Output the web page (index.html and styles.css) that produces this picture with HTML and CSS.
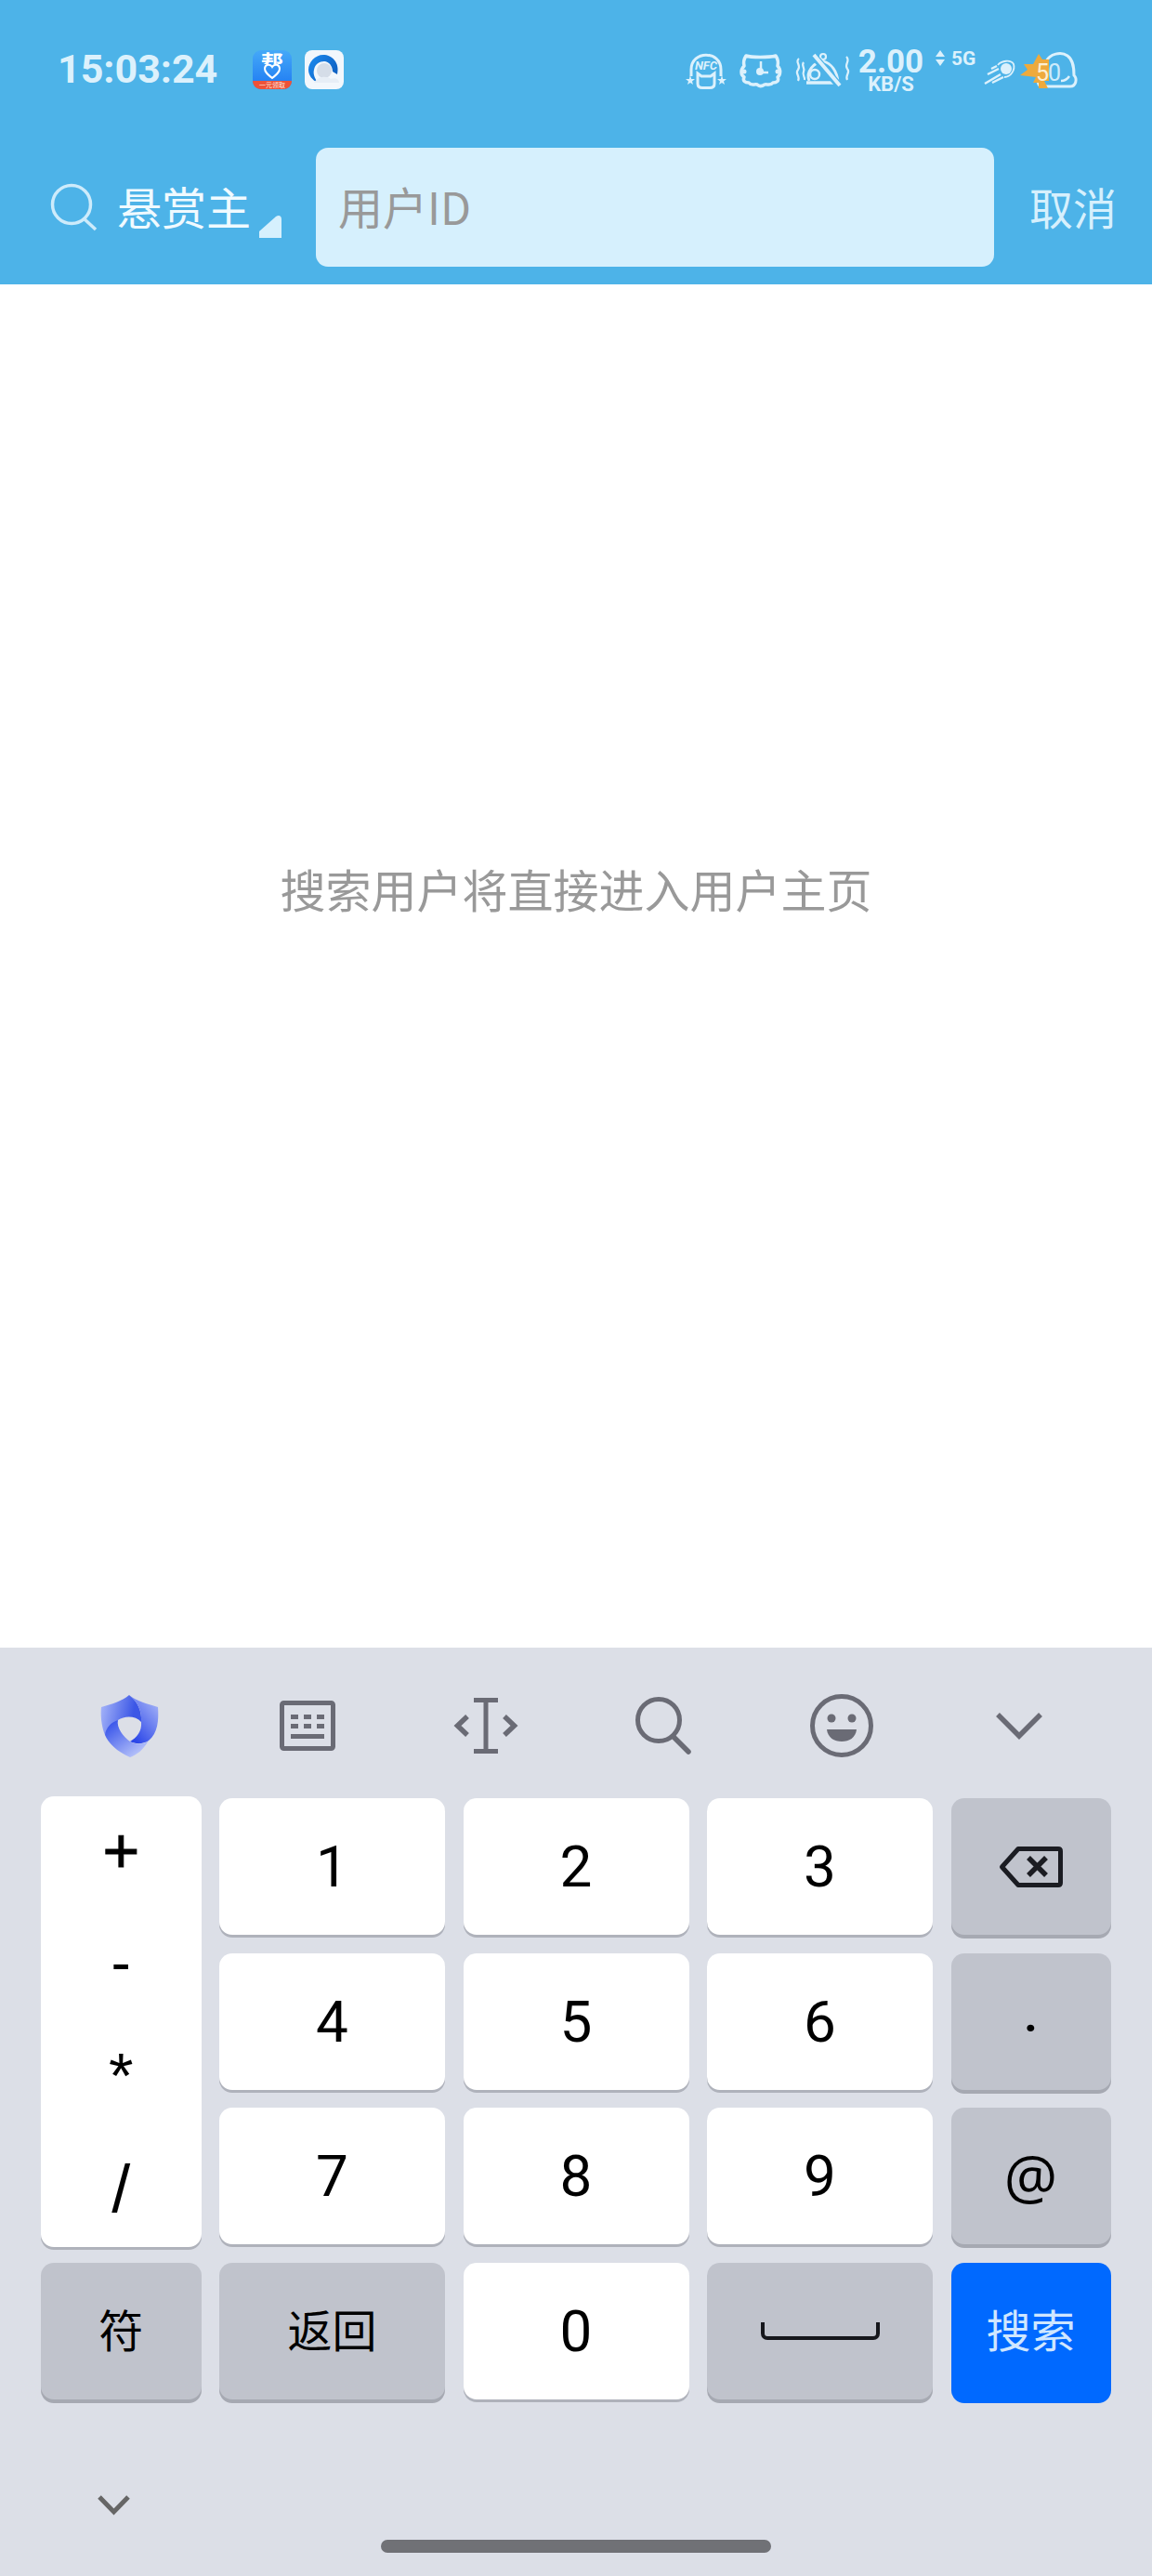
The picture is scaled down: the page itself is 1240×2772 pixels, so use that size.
FILE: index.html
```html
<!DOCTYPE html>
<html lang="zh-CN">
<head>
    <meta charset="UTF-8">
    <meta name="viewport" content="width=device-width, initial-scale=1.0">
    <title>搜索用户</title>
    <link rel="stylesheet" href="styles.css">
</head>
<body>

    <header class="topbar">
        <div class="status-bar">
            <span class="clock">15:03:24</span>

            <svg class="app-icon app-icon-first" width="42" height="42" viewBox="0 0 42 42">
                <defs>
                    <linearGradient id="bangBg" x1="0" y1="0" x2="0" y2="1">
                        <stop offset="0" stop-color="#45a9f8"/>
                        <stop offset="1" stop-color="#1d78f2"/>
                    </linearGradient>
                    <clipPath id="bangTop">
                        <rect x="0" y="0" width="42" height="15"/>
                    </clipPath>
                </defs>
                <rect width="42" height="42" rx="9" fill="url(#bangBg)"/>
                <path d="M0 33H42C42 38 38 42 33 42H9C4 42 0 38 0 33Z" fill="#ee5238"/>
                <text x="21" y="23" class="bang-char" clip-path="url(#bangTop)">帮</text>
                <path d="M21 30C16 26 13 23.500 13 20C13 15 19 14.500 21 18C23 14.500 29 15 29 20C29 23.500 26 26 21 30Z" fill="none" stroke="#fff" stroke-width="2"/>
                <text x="21" y="40" class="bang-tag">一元领取</text>
            </svg>

            <svg class="app-icon app-icon-second" width="42" height="42" viewBox="0 0 42 42">
                <defs>
                    <linearGradient id="qqArc" x1="0" y1="0" x2="1" y2="0.700">
                        <stop offset="0" stop-color="#1c8cf0"/>
                        <stop offset="1" stop-color="#0f5fc0"/>
                    </linearGradient>
                </defs>
                <rect width="42" height="42" rx="8" fill="#f2f7fc"/>
                <path d="M35 26C38 13 29 5 20 5C11 5 4 13 4 21C4 27 8 32 14 35C10 29 9 25 10 21C11 15 16 12 21 12C26 12 30 17 30 23Z" fill="url(#qqArc)"/>
                <circle cx="21" cy="22" r="8" fill="#d5dde8"/>
                <path d="M10 35C14 28 24 27 28 31C33 29 37 31 37 35Z" fill="#e7eef6"/>
            </svg>

            <div class="status-icons">
                <svg class="status-nfc" width="42" height="41" viewBox="0 0 42 41">
                    <path d="M5 27V20C5 -1 37 -1 37 20V27" fill="none" stroke="#dcf1fc" stroke-width="3"/>
                    <text x="21" y="20" class="nfc-text">NFC</text>
                    <path d="M12 24L16 27H26L30 24V35C30 38 28 39.500 25 39.500H17C14 39.500 12 38 12 35Z" fill="none" stroke="#dcf1fc" stroke-width="3"/>
                    <path d="M4 26L5.200 30H9L6 32.500L7 36L4 34L1 36L2 32.500L-1 30H2.800Z" fill="#dcf1fc"/>
                    <path d="M38 26L39.200 30H43L40 32.500L41 36L38 34L35 36L36 32.500L33 30H36.800Z" fill="#dcf1fc"/>
                </svg>

                <svg class="status-cat" width="44" height="37" viewBox="0 0 44 37">
                    <path d="M6 3C12 5 30 5 38 3C40 6 41 10 40 14C44 18 43 24 40 26C42 30 39 32 35 32C32 36 28 33 26 34C23 36 20 36 18 34C15 33 12 36 9 32C5 32 2 30 4 26C0 23 0 18 4 14C3 10 4 6 6 3Z" fill="none" stroke="#dcf1fc" stroke-width="3.500" stroke-linejoin="round"/>
                    <path d="M22 9V21H30" fill="none" stroke="#dcf1fc" stroke-width="2.500"/>
                    <circle cx="21" cy="20" r="4" fill="#dcf1fc"/>
                    <circle cx="4" cy="20" r="2.500" fill="#dcf1fc"/>
                    <circle cx="40" cy="20" r="2.500" fill="#dcf1fc"/>
                </svg>

                <svg class="status-dome" width="63" height="40" viewBox="0 0 63 40">
                    <path d="M6 8C1 12 9 15 5 20C1 24 8 27 5 32" fill="none" stroke="#dcf1fc" stroke-width="2.200"/>
                    <path d="M11 12C8 16 13 18 11 22C9 26 13 28 12 31" fill="none" stroke="#dcf1fc" stroke-width="2.200"/>
                    <path d="M57 6C62 11 54 14 58 19C62 23 55 26 58 31" fill="none" stroke="#dcf1fc" stroke-width="2.200"/>
                    <path d="M17 32C13 22 22 12 32 11C41 13 47 22 48 33" fill="none" stroke="#dcf1fc" stroke-width="2.800"/>
                    <path d="M14 34H50" stroke="#dcf1fc" stroke-width="3.500"/>
                    <circle cx="23" cy="25" r="5" fill="none" stroke="#dcf1fc" stroke-width="2.500"/>
                    <circle cx="32" cy="6" r="3" fill="none" stroke="#dcf1fc" stroke-width="2.200"/>
                    <path d="M20 3L50 38" stroke="#4db3e8" stroke-width="8"/>
                    <path d="M22 4L50 37" stroke="#dcf1fc" stroke-width="4"/>
                </svg>

                <div class="net-speed">
                    <span class="net-value">2.00</span>
                    <span class="net-unit">KB/S</span>
                </div>

                <div class="net-type">
                    <svg width="10" height="17" viewBox="0 0 10 17">
                        <path d="M5 0L10 7H0Z M5 17L0 10H10Z" fill="#dcf1fc"/>
                    </svg>
                    <span class="net-label">5G</span>
                </div>

                <svg class="status-comet" width="32" height="26" viewBox="0 0 32 26">
                    <circle cx="23" cy="9" r="6" fill="#dcf1fc"/>
                    <path d="M14 5C18 0 28 -1 31 4C33 10 28 18 21 18" fill="none" stroke="#dcf1fc" stroke-width="1.800"/>
                    <path d="M7 9L13 6M3 15L15 9M0 25L17 15M8 24L20 18" stroke="#dcf1fc" stroke-width="2.400" fill="none"/>
                </svg>

                <div class="battery">
                    <svg width="62" height="41" viewBox="0 0 62 41">
                        <path d="M28 11C32 3 44 0 51 5C58 10 58 20 58 26C62 30 60 38 54 38H24C20 38 18 34 21 30" fill="none" stroke="#dcf1fc" stroke-width="3"/>
                        <path d="M44 32C49 32 51 30 53 27" fill="none" stroke="#dcf1fc" stroke-width="2.500"/>
                        <path d="M20 3L24 9H31V32H26L30 40H20V34H14L17 28L0 26L8 20L4 14L14 14Z" fill="#eeaa3c"/>
                        <text x="24" y="32" class="battery-five">5</text>
                        <text x="37" y="32" class="battery-zero">0</text>
                    </svg>
                </div>
            </div>
        </div>

        <div class="search-row">
            <svg class="search-icon" width="51" height="50" viewBox="0 0 51 50">
                <circle cx="23" cy="22" r="20.500" fill="none" stroke="#cdebfb" stroke-width="3.500"/>
                <path d="M36 37L49 49" fill="none" stroke="#cdebfb" stroke-width="3.500"/>
            </svg>
            <span class="search-type">悬赏主</span>
            <svg class="search-type-arrow" width="24" height="24" viewBox="0 0 24 24">
                <path d="M0 24V17L18 1C21 -1 24 0 24 4V24Z" fill="#d6f0fd"/>
            </svg>
            <div class="search-input">用户ID</div>
            <span class="search-cancel">取消</span>
        </div>
    </header>

    <main class="search-tip">
        <p>搜索用户将直接进入用户主页</p>
    </main>

    <section class="keyboard">
        <div class="kb-tools">
            <div class="kb-tool">
                <svg width="63" height="68" viewBox="0 0 63 68">
                    <defs>
                        <linearGradient id="shieldA" x1="0" y1="0.300" x2="1" y2="0.500">
                            <stop offset="0" stop-color="#a3b2f8"/>
                            <stop offset="0.800" stop-color="#3c57e6"/>
                        </linearGradient>
                        <linearGradient id="shieldB" x1="1" y1="0" x2="0.300" y2="1">
                            <stop offset="0" stop-color="#b2bff9"/>
                            <stop offset="1" stop-color="#2c47e8"/>
                        </linearGradient>
                        <linearGradient id="shieldC" x1="0" y1="0.200" x2="0.700" y2="1">
                            <stop offset="0" stop-color="#3a56ea"/>
                            <stop offset="1" stop-color="#b8c4fa"/>
                        </linearGradient>
                    </defs>
                    <path d="M31 1C40 8 45 18 44 30C38 23 26 23 19 28L5 44C1 34 0 22 1 14C12 11 24 7 31 1Z" fill="url(#shieldA)"/>
                    <path d="M31 1C38 7 52 11 62 14C63 28 62 42 52 50C46 54 38 54 32 51C39 47 45 40 44 30C45 18 40 8 31 1Z" fill="url(#shieldB)"/>
                    <path d="M19 28C17 36 25 46 32 51C40 55 48 54 52 50C46 60 40 65 32 68C18 62 8 52 5 44C6 36 12 30 19 28Z" fill="url(#shieldC)"/>
                </svg>
            </div>
            <div class="kb-tool">
                <svg width="60" height="54" viewBox="0 0 60 54">
                    <rect x="2.500" y="2.500" width="55" height="49" rx="2" fill="none" stroke="#6a6b75" stroke-width="5"/>
                    <path d="M12 17.500H20M26 17.500H34M40 17.500H48M12 27.500H20M26 27.500H34M40 27.500H48" stroke="#6a6b75" stroke-width="5" fill="none"/>
                    <path d="M12 38.500H48" stroke="#6a6b75" stroke-width="5" fill="none"/>
                </svg>
            </div>
            <div class="kb-tool">
                <svg width="68" height="60" viewBox="0 0 68 60">
                    <path d="M21 2.500H47M34 2.500V57.500M21 57.500H47" stroke="#6a6b75" stroke-width="5" fill="none"/>
                    <path d="M14 20L3.500 30L14 40M54 20L64.500 30L54 40" stroke="#6a6b75" stroke-width="5.500" fill="none"/>
                </svg>
            </div>
            <div class="kb-tool">
                <svg width="60" height="62" viewBox="0 0 60 62">
                    <circle cx="25" cy="25" r="22.500" fill="none" stroke="#6a6b75" stroke-width="5"/>
                    <path d="M41 43L57 59" stroke="#6a6b75" stroke-width="5.500" stroke-linecap="round" fill="none"/>
                </svg>
            </div>
            <div class="kb-tool">
                <svg width="68" height="68" viewBox="0 0 68 68">
                    <circle cx="34" cy="34" r="31.500" fill="none" stroke="#6a6b75" stroke-width="5"/>
                    <circle cx="23" cy="26" r="4.500" fill="#6a6b75"/>
                    <circle cx="45" cy="26" r="4.500" fill="#6a6b75"/>
                    <path d="M18 38H50C49 47 42 51 34 51C26 51 19 47 18 38Z" fill="#6a6b75"/>
                </svg>
            </div>
            <div class="kb-tool">
                <svg width="50" height="30" viewBox="0 0 50 30">
                    <path d="M2 3L25 26L48 3" stroke="#6a6b75" stroke-width="5.500" fill="none"/>
                </svg>
            </div>
        </div>

        <div class="kb-keys">
            <div class="key key-symbols">
                <span class="symbol symbol-plus">+</span>
                <span class="symbol">-</span>
                <span class="symbol symbol-star">*</span>
                <span class="symbol symbol-slash">/</span>
            </div>
            <div class="key">1</div>
            <div class="key">2</div>
            <div class="key">3</div>
            <div class="key key-gray">
                <svg width="68" height="44" viewBox="0 0 68 44">
                    <path d="M20 2.500H63C65 2.500 65.500 3 65.500 5V39C65.500 41 65 41.500 63 41.500H20L2.500 22Z" fill="none" stroke="#1b1c22" stroke-width="5" stroke-linejoin="round"/>
                    <path d="M31 12L50 31M50 12L31 31" stroke="#1b1c22" stroke-width="5.500" fill="none"/>
                </svg>
            </div>
            <div class="key">4</div>
            <div class="key">5</div>
            <div class="key">6</div>
            <div class="key key-gray key-dot">.</div>
            <div class="key">7</div>
            <div class="key">8</div>
            <div class="key">9</div>
            <div class="key key-gray key-at">@</div>
            <div class="key key-gray key-text">符</div>
            <div class="key key-gray key-text">返回</div>
            <div class="key">0</div>
            <div class="key key-gray">
                <svg width="128" height="19" viewBox="0 0 128 19">
                    <path d="M2 0V12C2 15 4 17 7 17H121C124 17 126 15 126 12V0" fill="none" stroke="#16171c" stroke-width="4"/>
                </svg>
            </div>
            <div class="key key-blue key-text">搜索</div>
        </div>

        <svg class="kb-collapse" width="35" height="22" viewBox="0 0 35 22">
            <path d="M2 2L17.500 18L33 2" stroke="#666" stroke-width="5" fill="none"/>
        </svg>
        <div class="home-bar"></div>
    </section>

</body>
</html>
```

FILE: styles.css
```css
body {
    font-family: "Noto Sans CJK SC", Roboto, sans-serif;
    margin: 0;
    padding: 0;
    width: 1240px;
    height: 2772px;
    overflow: hidden;
    background-color: #fff;
    text-autospace: no-autospace;
}

svg {
    display: block;
    overflow: visible;
}

.topbar {
    background-color: #4db3e8;
    height: 306px;
}

.status-bar {
    display: flex;
    align-items: center;
    height: 150px;
    padding-left: 62px;
}

.clock {
    font-family: Roboto, sans-serif;
    font-weight: 700;
    font-size: 43px;
    color: #dcf1fc;
    width: 172px;
    margin-bottom: 3px;
    white-space: nowrap;
}

.app-icon-first {
    margin-left: 38px;
}

.app-icon-second {
    margin-left: 14px;
}

.bang-char {
    font-family: "Noto Sans CJK SC", sans-serif;
    font-size: 24px;
    font-weight: 700;
    fill: #fff;
    text-anchor: middle;
}

.bang-tag {
    font-family: "Noto Sans CJK SC", sans-serif;
    font-size: 7px;
    fill: #ffe4dc;
    text-anchor: middle;
}

.status-icons {
    display: flex;
    align-items: center;
    margin-left: 369px;
}

.status-cat {
    margin-left: 16px;
}

.status-dome {
    margin-left: 13px;
}

.nfc-text {
    font-family: Roboto, sans-serif;
    font-style: italic;
    font-weight: 700;
    font-size: 13px;
    fill: #dcf1fc;
    text-anchor: middle;
}

.net-speed {
    display: flex;
    flex-direction: column;
    align-items: center;
    width: 70px;
    margin-left: 7px;
    font-family: Roboto, sans-serif;
    font-weight: 700;
    color: #dcf1fc;
}

.net-value {
    font-size: 35px;
    line-height: 30px;
}

.net-unit {
    font-size: 22px;
    line-height: 17px;
}

.net-type {
    display: flex;
    align-items: flex-start;
    gap: 7px;
    margin-left: 13px;
    margin-bottom: 24px;
}

.net-label {
    font-family: Roboto, sans-serif;
    font-weight: 700;
    font-size: 21px;
    line-height: 18px;
    color: #dcf1fc;
}

.status-comet {
    margin-left: 10px;
    margin-top: 5px;
}

.battery {
    margin-left: 6px;
}

.battery-five,
.battery-zero {
    font-family: Roboto, sans-serif;
    font-size: 25px;
    text-anchor: middle;
}

.battery-five {
    fill: #fbeed2;
}

.battery-zero {
    fill: #cdebfb;
}

.search-row {
    display: flex;
    align-items: center;
    padding: 9px 0 19px 54px;
}

.search-type {
    margin: 0 0 4px 21px;
    font-size: 48px;
    color: #f0faff;
    white-space: nowrap;
}

.search-type-arrow {
    align-self: flex-end;
    margin: 0 0 31px 9px;
}

.search-input {
    box-sizing: border-box;
    width: 730px;
    height: 128px;
    margin-left: 37px;
    padding-left: 24px;
    border-radius: 13px;
    background-color: #d6f0fd;
    color: #999;
    font-size: 48px;
    line-height: 125px;
}

.search-cancel {
    margin: 0 0 4px 38px;
    font-size: 47px;
    color: #d6f0fd;
    white-space: nowrap;
}

.search-tip {
    box-sizing: border-box;
    display: flex;
    align-items: center;
    justify-content: center;
    height: 1467px;
    padding-bottom: 168px;
    color: #999;
    font-size: 49px;
}

.search-tip p {
    margin: 0;
}

.keyboard {
    height: 999px;
    background-color: #dcdfe7;
}

.kb-tools {
    box-sizing: border-box;
    display: grid;
    grid-template-columns: repeat(6, 191.5px);
    height: 162px;
    padding: 6px 0 0 44px;
}

.kb-tool {
    display: flex;
    align-items: center;
    justify-content: center;
}

.kb-keys {
    display: grid;
    grid-template-columns: 172.5px 243px 243px 243px 172px;
    grid-auto-rows: 147px;
    gap: 19.67px 19.5px;
    padding-left: 44px;
}

.key {
    display: flex;
    align-items: center;
    justify-content: center;
    border-radius: 14px;
    background-color: #fff;
    box-shadow: 0 3px 0 #afb2bb;
    color: #000;
    font-family: Roboto, sans-serif;
    font-size: 62px;
}

.key-gray {
    background-color: #c0c3cc;
    box-shadow: 0 4px 0 #a6a9b2;
}

.key-blue {
    background-color: #0069ff;
    box-shadow: 0 4px 0 #0069ff;
    color: #cfe6ff;
}

.key-text {
    box-sizing: border-box;
    padding-bottom: 7px;
    font-family: "Noto Sans CJK SC", sans-serif;
    font-size: 48px;
}

.key-dot {
    box-sizing: border-box;
    padding-bottom: 12px;
    font-size: 50px;
    font-weight: 700;
}

.key-at {
    font-family: "Open Sans", sans-serif;
    font-size: 64px;
}

.key-symbols {
    grid-row: span 3;
    flex-direction: column;
    justify-content: flex-start;
    margin: -2px 0 -3px;
}

.symbol {
    box-sizing: border-box;
    display: flex;
    align-items: center;
    justify-content: center;
    height: 122px;
    padding-bottom: 6px;
    font-family: "Liberation Sans", sans-serif;
    font-size: 64px;
}

.symbol-plus {
    font-size: 68px;
    -webkit-text-stroke: 1px #000;
}

.symbol-star {
    font-size: 68px;
}

.symbol-slash {
    font-size: 72px;
}

.kb-collapse {
    margin: 103px 0 0 105px;
}

.home-bar {
    width: 420px;
    height: 14px;
    margin: 26px auto 0;
    border-radius: 7px;
    background-color: #707176;
}
```
